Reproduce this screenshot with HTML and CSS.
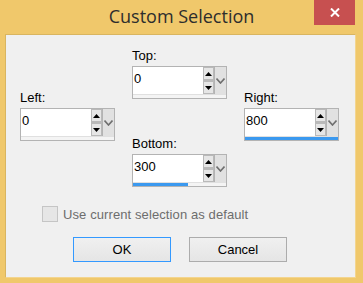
FILE: index.html
```html
<!DOCTYPE html>
<html>
<head>
<meta charset="utf-8">
<link rel="stylesheet" href="styles.css">
</head>
<body>
<div class="window">
  <div class="titlebar">
    <span></span>
    <h1 class="title">Custom Selection</h1>
    <button class="close" aria-label="Close">
      <svg width="10" height="9" viewBox="0 0 10 9"><path d="M1 0.5 L9 8.5 M9 0.5 L1 8.5" stroke="#fff" stroke-width="2" fill="none"/></svg>
    </button>
  </div>
  <div class="client">
    <div class="fields">
      <div class="col col-side">
        <div class="field">
          <label class="label">Left:</label>
          <div class="box">
            <div class="edit">0</div>
            <div class="spin">
              <div class="sb"><svg width="7" height="4" viewBox="0 0 7 4"><path d="M0 4 L3.5 0 L7 4Z" fill="#000"/></svg></div>
              <div class="sb"><svg width="7" height="4" viewBox="0 0 7 4"><path d="M0 0 L3.5 4 L7 0Z" fill="#000"/></svg></div>
            </div>
            <div class="drop"><svg width="9" height="6" viewBox="0 0 9 6"><path d="M0.5 0.5 L4.5 5 L8.5 0.5" stroke="#6f6f6f" stroke-width="1.6" fill="none"/></svg></div>
            <div class="strip"></div>
          </div>
        </div>
      </div>
      <div class="col col-mid">
        <div class="field">
          <label class="label">Top:</label>
          <div class="box">
            <div class="edit">0</div>
            <div class="spin">
              <div class="sb"><svg width="7" height="4" viewBox="0 0 7 4"><path d="M0 4 L3.5 0 L7 4Z" fill="#000"/></svg></div>
              <div class="sb"><svg width="7" height="4" viewBox="0 0 7 4"><path d="M0 0 L3.5 4 L7 0Z" fill="#000"/></svg></div>
            </div>
            <div class="drop"><svg width="9" height="6" viewBox="0 0 9 6"><path d="M0.5 0.5 L4.5 5 L8.5 0.5" stroke="#6f6f6f" stroke-width="1.6" fill="none"/></svg></div>
            <div class="strip"></div>
          </div>
        </div>
        <div class="field">
          <label class="label">Bottom:</label>
          <div class="box">
            <div class="edit">300</div>
            <div class="spin">
              <div class="sb"><svg width="7" height="4" viewBox="0 0 7 4"><path d="M0 4 L3.5 0 L7 4Z" fill="#000"/></svg></div>
              <div class="sb"><svg width="7" height="4" viewBox="0 0 7 4"><path d="M0 0 L3.5 4 L7 0Z" fill="#000"/></svg></div>
            </div>
            <div class="drop"><svg width="9" height="6" viewBox="0 0 9 6"><path d="M0.5 0.5 L4.5 5 L8.5 0.5" stroke="#6f6f6f" stroke-width="1.6" fill="none"/></svg></div>
            <div class="strip"><div class="fill" style="width:59%"></div></div>
          </div>
        </div>
      </div>
      <div class="col col-side">
        <div class="field">
          <label class="label">Right:</label>
          <div class="box">
            <div class="edit">800</div>
            <div class="spin">
              <div class="sb"><svg width="7" height="4" viewBox="0 0 7 4"><path d="M0 4 L3.5 0 L7 4Z" fill="#000"/></svg></div>
              <div class="sb"><svg width="7" height="4" viewBox="0 0 7 4"><path d="M0 0 L3.5 4 L7 0Z" fill="#000"/></svg></div>
            </div>
            <div class="drop"><svg width="9" height="6" viewBox="0 0 9 6"><path d="M0.5 0.5 L4.5 5 L8.5 0.5" stroke="#6f6f6f" stroke-width="1.6" fill="none"/></svg></div>
            <div class="strip"><div class="fill" style="width:100%"></div></div>
          </div>
        </div>
      </div>
    </div>
    <div class="check">
      <span class="checkbox"></span>
      <span class="check-text">Use current selection as default</span>
    </div>
    <div class="buttons">
      <button class="btn btn-default">OK</button>
      <button class="btn">Cancel</button>
    </div>
  </div>
</div>
</body>
</html>
```
FILE: styles.css
```css
* { box-sizing: border-box; }
html, body { margin: 0; padding: 0; }
body {
  background: #f0c86b;
  font-family: "Liberation Sans", Arial, sans-serif;
  font-size: 13px;
  color: #000;
}
.window {
  width: 363px;
  height: 283px;
  display: flex;
  flex-direction: column;
}
.titlebar {
  height: 34px;
  display: grid;
  grid-template-columns: 1fr auto 1fr;
  align-items: start;
}
.title {
  margin: 0;
  padding-top: 4px;
  font-family: "Open Sans", sans-serif;
  font-weight: normal;
  font-size: 18px;
  line-height: 25px;
  color: #2d2d2d;
  white-space: nowrap;
}
.close {
  justify-self: end;
  margin: 0 8px 0 0;
  width: 41px;
  height: 25px;
  padding: 0;
  border: 0;
  background: #c75050;
  display: flex;
  align-items: center;
  justify-content: center;
}
.client {
  margin-left: 5px;
  width: 351px;
  height: 244px;
  background: #f0f0f0;
  border: 1px solid #d9b560;
  border-right-color: #f3d58f;
  border-bottom-color: #f3d58f;
}
.fields {
  display: grid;
  grid-template-columns: repeat(3, 95px);
  column-gap: 17px;
  padding-left: 14px;
  align-items: start;
}
.col { display: flex; flex-direction: column; }
.col-side { padding-top: 55px; }
.col-mid { padding-top: 13px; gap: 37px; }
.field { display: flex; flex-direction: column; }
.label {
  line-height: 15px;
  margin-bottom: 3px;
  color: #000;
}
.box {
  height: 33px;
  border: 1px solid #b3b3b3;
  background: #fff;
  display: grid;
  grid-template-columns: 1fr 11px 12px;
  grid-template-rows: 1fr 4px;
}
.edit {
  padding: 4px 0 0 1px;
  line-height: 15px;
}
.spin {
  display: flex;
  flex-direction: column;
}
.sb {
  flex: 1;
  border: 1px solid #b9b9b9;
  background: #e6e6e6;
  display: flex;
  align-items: center;
  justify-content: center;
}
.sb + .sb { border-top-width: 2px; }
.drop {
  background: #e1e1e1;
  border-left: 1px solid #b3b3b3;
  display: flex;
  align-items: center;
  justify-content: center;
}
.strip {
  grid-column: 1 / -1;
  background: #f4f4f4;
  border-top: 1px solid #e0e0e0;
}
.fill {
  height: 100%;
  background: #3b99ef;
}
.check {
  margin-top: 19px;
  padding-left: 36px;
  display: flex;
  align-items: center;
  gap: 5px;
  height: 16px;
}
.checkbox {
  width: 16px;
  height: 16px;
  border: 1px solid #c5c5c5;
  background: #e6e6e6;
}
.check-text {
  color: #6d6d6d;
  font-size: 13px;
  letter-spacing: 0.1px;
}
.buttons {
  margin-top: 15px;
  padding-left: 67px;
  display: flex;
  gap: 18px;
}
.btn {
  width: 98px;
  height: 25px;
  border: 1px solid #acacac;
  background: linear-gradient(#f0f0f0, #e5e5e5);
  font-family: "Liberation Sans", Arial, sans-serif;
  font-size: 13px;
  color: #000;
  padding: 0;
}
.btn-default { border-color: #3399ff; }
```
